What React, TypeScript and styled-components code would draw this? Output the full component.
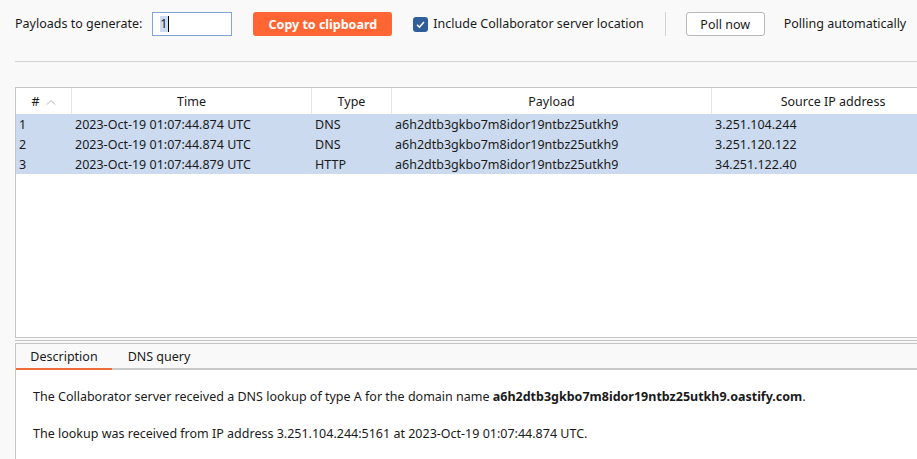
import styled, { createGlobalStyle } from 'styled-components';

const GlobalStyle = createGlobalStyle`
	html, body {
		margin: 0;
		padding: 0;
		background: #f9f9f9;
	}
	body {
		font-family: 'Noto Sans', 'Open Sans', sans-serif;
		font-size: 12.5px;
		color: #1a1a1a;
	}
`;

const Page = styled.div`
	width: 917px;
	height: 459px;
	overflow: hidden;
	display: flex;
	flex-direction: column;
	background: #f9f9f9;
	& > * {
		flex-shrink: 0;
	}
`;

const Toolbar = styled.div`
	display: flex;
	align-items: center;
	height: 24px;
	margin: 12px 0 0 15px;
	white-space: nowrap;
`;

const Label = styled.span<{ $ml?: number }>`
	margin-left: ${(p) => p.$ml ?? 0}px;
	line-height: 24px;
`;

const CountInput = styled.div`
	box-sizing: border-box;
	width: 80px;
	height: 24px;
	margin-left: 10px;
	border: 1px solid #7ea6d8;
	background: #fff;
	display: flex;
	align-items: center;
	padding-left: 7px;
`;

const Selected = styled.span`
	background: #cddcf0;
	line-height: 16px;
`;

const Caret = styled.span`
	width: 1px;
	height: 16px;
	background: #000;
`;

const PrimaryButton = styled.button`
	box-sizing: border-box;
	width: 139px;
	height: 24px;
	margin-left: 21px;
	border: none;
	border-radius: 3px;
	background: #ff6633;
	color: #fff;
	font-family: inherit;
	font-size: 12.5px;
	font-weight: 700;
	padding: 0;
`;

const Check = styled.span`
	box-sizing: border-box;
	width: 15px;
	height: 15px;
	margin-left: 21px;
	border-radius: 3px;
	background: #2f5f98;
	display: flex;
	align-items: center;
	justify-content: center;
`;

const VSep = styled.span`
	width: 1px;
	height: 24px;
	margin-left: 21px;
	background: #d2d2d2;
`;

const PlainButton = styled.button`
	box-sizing: border-box;
	width: 79px;
	height: 24px;
	margin-left: 20px;
	border: 1px solid #b8b8b8;
	border-radius: 3px;
	background: #fff;
	font-family: inherit;
	font-size: 12.5px;
	color: #1a1a1a;
	padding: 0;
`;

const Rule = styled.div`
	height: 1px;
	margin: 25px 0 0 15px;
	background: #d2d2d2;
`;

const TableBox = styled.div`
	box-sizing: border-box;
	margin: 25px 0 0 15px;
	height: 251px;
	border: 1px solid #c4c4c4;
	border-right: none;
	background: #fff;
	overflow: hidden;
`;

const Grid = styled.div`
	display: grid;
	grid-template-columns: 56px 240px 80px 320px 242px;
	width: 938px;
`;

const HeadCell = styled.div<{ $last?: boolean }>`
	height: 26px;
	padding-top: 1px;
	box-sizing: border-box;
	text-align: center;
	border-right: ${(p) => (p.$last ? 'none' : '1px solid #e6e6e6')};
	display: flex;
	justify-content: center;
	align-items: center;
	gap: 6px;
`;

const Cell = styled.div`
	height: 20px;
	line-height: 21px;
	padding-left: 3px;
	background: #cbdaef;
	white-space: nowrap;
`;

const Splitter = styled.div`
	height: 5px;
	border-bottom: 1px solid #c4c4c4;
	margin-left: 15px;
	position: relative;
	&::before {
		content: '';
		position: absolute;
		left: 0;
		right: 0;
		top: 2px;
		height: 1px;
		background: #c4c4c4;
	}
`;

const DetailPanel = styled.div`
	flex: 1;
	margin-left: 15px;
	border-left: 1px solid #c4c4c4;
	display: flex;
	flex-direction: column;
`;

const TabStrip = styled.div`
	display: flex;
	height: 24px;
	border-bottom: 2px solid #c8c8c8;
	background: #f9f9f9;
`;

const Tab = styled.div<{ $active?: boolean; $w: number }>`
	width: ${(p) => p.$w}px;
	text-align: center;
	line-height: 25px;
	box-sizing: border-box;
	border-bottom: 2px solid ${(p) => (p.$active ? '#f06a3a' : 'transparent')};
	margin-bottom: -2px;
`;

const Body = styled.div`
	flex: 1;
	background: #fff;
	padding: 18px 0 0 17px;
`;

const Para = styled.p`
	margin: 0 0 19px;
	line-height: 18px;
	white-space: nowrap;
`;

const rows = [
	['1', '2023-Oct-19 01:07:44.874 UTC', 'DNS', 'a6h2dtb3gkbo7m8idor19ntbz25utkh9', '3.251.104.244'],
	['2', '2023-Oct-19 01:07:44.874 UTC', 'DNS', 'a6h2dtb3gkbo7m8idor19ntbz25utkh9', '3.251.120.122'],
	['3', '2023-Oct-19 01:07:44.879 UTC', 'HTTP', 'a6h2dtb3gkbo7m8idor19ntbz25utkh9', '34.251.122.40'],
];

export default function App() {
	return (
		<Page>
			<GlobalStyle />
			<Toolbar>
				<Label>Payloads to generate:</Label>
				<CountInput>
					<Selected>1</Selected>
					<Caret />
				</CountInput>
				<PrimaryButton>Copy to clipboard</PrimaryButton>
				<Check>
					<svg width='11' height='11' viewBox='0 0 11 11'>
						<path d='M2 5.8 L4.4 8.2 L9 3' fill='none' stroke='#fff' strokeWidth='1.6' />
					</svg>
				</Check>
				<Label $ml={5}>Include Collaborator server location</Label>
				<VSep />
				<PlainButton>Poll now</PlainButton>
				<Label $ml={19}>Polling automatically</Label>
			</Toolbar>
			<Rule />
			<TableBox>
				<Grid>
					<HeadCell>
						#
						<svg width='10' height='6' viewBox='0 0 10 6'>
							<path d='M1 5.5 L5 1.5 L9 5.5' fill='none' stroke='#b0b0b0' strokeWidth='1' />
						</svg>
					</HeadCell>
					<HeadCell>Time</HeadCell>
					<HeadCell>Type</HeadCell>
					<HeadCell>Payload</HeadCell>
					<HeadCell $last>Source IP address</HeadCell>
					{rows.map((r) => r.map((v, i) => <Cell key={r[0] + i}>{v}</Cell>))}
				</Grid>
			</TableBox>
			<Splitter />
			<DetailPanel>
				<TabStrip>
					<Tab $active $w={96}>Description</Tab>
					<Tab $w={94}>DNS query</Tab>
				</TabStrip>
				<Body>
					<Para>
						The Collaborator server received a DNS lookup of type A for the domain name{' '}
						<b>a6h2dtb3gkbo7m8idor19ntbz25utkh9.oastify.com</b>.
					</Para>
					<Para>The lookup was received from IP address 3.251.104.244:5161 at 2023-Oct-19 01:07:44.874 UTC.</Para>
				</Body>
			</DetailPanel>
		</Page>
	);
}
